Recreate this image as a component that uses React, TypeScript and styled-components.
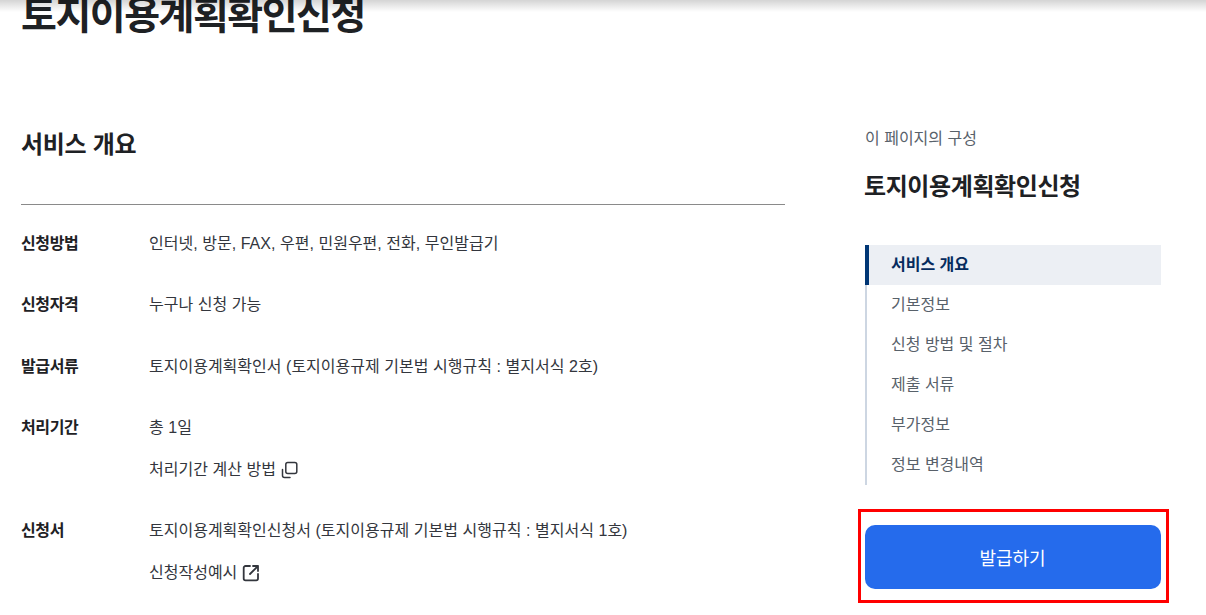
import React from "react";
import styled, { createGlobalStyle } from "styled-components";

const GlobalStyle = createGlobalStyle`
  html, body {
    margin: 0;
    padding: 0;
    height: 100%;
    overflow: hidden;
    background: #fff;
  }
  body {
    font-family: "Liberation Sans", "Noto Sans CJK KR", sans-serif;
    color: #1e2124;
  }
`;

const Page = styled.div`
  position: relative;
  width: 1206px;
  height: 615px;
  overflow: hidden;
`;

const TopShadow = styled.div`
  position: absolute;
  top: 0;
  left: 0;
  right: 0;
  height: 12px;
  background: linear-gradient(rgba(0, 0, 0, 0.17), rgba(0, 0, 0, 0));
`;

const Title = styled.h1`
  margin: -10px 0 0 21px;
  font-size: 39px;
  line-height: 52px;
  font-weight: 700;
  letter-spacing: -1.5px;
  color: #1e2124;
`;

const Columns = styled.div`
  display: flex;
  margin-top: 85px;
  padding-left: 21px;
`;

const Main = styled.main`
  width: 764px;
`;

const SectionTitle = styled.h2`
  margin: 0;
  height: 77px;
  font-size: 24px;
  line-height: 36px;
  font-weight: 700;
  letter-spacing: -0.3px;
  border-bottom: 1px solid #8a8a8a;
`;

const Rows = styled.dl`
  margin: 0;
`;

const Row = styled.div<{ $top: number }>`
  display: grid;
  grid-template-columns: 128px 1fr;
  margin-top: ${(p) => p.$top}px;
`;

const Label = styled.dt`
  font-size: 16px;
  line-height: 24px;
  font-weight: 700;
  letter-spacing: -0.4px;
`;

const Value = styled.dd`
  margin: 0;
  display: flex;
  flex-direction: column;
  gap: 18px;
`;

const Line = styled.div`
  display: flex;
  align-items: center;
  gap: 5px;
  font-size: 16px;
  line-height: 24px;
  word-spacing: 0.15px;
  color: #33363d;
`;

const Aside = styled.aside`
  width: 296px;
  margin-left: 80px;
`;

const Eyebrow = styled.div`
  margin-top: 1px;
  font-size: 16px;
  line-height: 22px;
  color: #58616a;
`;

const AsideTitle = styled.div`
  margin: 21px 0 0 -1px;
  font-size: 24px;
  line-height: 32px;
  font-weight: 700;
  letter-spacing: -0.4px;
`;

const Nav = styled.nav`
  margin-top: 42px;
  display: flex;
  flex-direction: column;
  border-left: 2px solid #cdd6e2;
`;

const NavItem = styled.a<{ $active?: boolean }>`
  display: block;
  height: 40px;
  margin-left: -2px;
  padding-left: 22px;
  font-size: 16px;
  line-height: 40px;
  font-weight: ${(p) => (p.$active ? 700 : 400)};
  color: ${(p) => (p.$active ? "#052b5e" : "#58616a")};
  background: ${(p) => (p.$active ? "#eceff4" : "transparent")};
  border-left: 4px solid ${(p) => (p.$active ? "#003675" : "transparent")};
`;

const Highlight = styled.div`
  margin: 24px 0 0 -7px;
  width: 311px;
  height: 94px;
  box-sizing: border-box;
  border: 3px solid #ff0000;
  padding: 13px 5px 11px 4px;
`;

const IssueButton = styled.button`
  display: block;
  width: 100%;
  height: 64px;
  padding: 0 1px 0 0;
  border: 0;
  border-radius: 10px;
  background: #256bec;
  color: #fff;
  font-family: inherit;
  font-size: 18px;
  font-weight: 400;
`;

const CopyIcon = () => (
  <svg width="18" height="18" viewBox="0 0 18 18" fill="none" stroke="#33363d" strokeWidth="1.5" strokeLinecap="round">
    <rect x="4.8" y="1.5" width="11" height="11" rx="2" />
    <path d="M1.5 8.5v6a2 2 0 0 0 2 2H9" />
  </svg>
);

const ExternalIcon = () => (
  <svg width="18" height="18" viewBox="0 0 18 18" fill="none" stroke="#33363d" strokeWidth="1.8" strokeLinecap="round" strokeLinejoin="round">
    <path d="M8 2H3.5A1.8 1.8 0 0 0 1.7 3.8v10.7a1.8 1.8 0 0 0 1.8 1.8h10.7a1.8 1.8 0 0 0 1.8-1.8V10" />
    <path d="M8 10l8-8M11 2h5v5" />
  </svg>
);

const navItems = ["서비스 개요", "기본정보", "신청 방법 및 절차", "제출 서류", "부가정보", "정보 변경내역"];

export default function App() {
  return (
    <Page>
      <GlobalStyle />
      <TopShadow />
      <Title>토지이용계획확인신청</Title>
      <Columns>
        <Main>
          <SectionTitle>서비스 개요</SectionTitle>
          <Rows>
            <Row $top={27}>
              <Label>신청방법</Label>
              <Value>
                <Line>인터넷, 방문, FAX, 우편, 민원우편, 전화, 무인발급기</Line>
              </Value>
            </Row>
            <Row $top={37}>
              <Label>신청자격</Label>
              <Value>
                <Line>누구나 신청 가능</Line>
              </Value>
            </Row>
            <Row $top={38}>
              <Label>발급서류</Label>
              <Value>
                <Line>토지이용계획확인서 (토지이용규제 기본법 시행규칙 : 별지서식 2호)</Line>
              </Value>
            </Row>
            <Row $top={37}>
              <Label>처리기간</Label>
              <Value>
                <Line>총 1일</Line>
                <Line>
                  처리기간 계산 방법 <CopyIcon />
                </Line>
              </Value>
            </Row>
            <Row $top={37}>
              <Label>신청서</Label>
              <Value>
                <Line>토지이용계획확인신청서 (토지이용규제 기본법 시행규칙 : 별지서식 1호)</Line>
                <Line>
                  신청작성예시 <ExternalIcon />
                </Line>
              </Value>
            </Row>
          </Rows>
        </Main>
        <Aside>
          <Eyebrow>이 페이지의 구성</Eyebrow>
          <AsideTitle>토지이용계획확인신청</AsideTitle>
          <Nav>
            {navItems.map((item, i) => (
              <NavItem key={item} $active={i === 0}>
                {item}
              </NavItem>
            ))}
          </Nav>
          <Highlight>
            <IssueButton>발급하기</IssueButton>
          </Highlight>
        </Aside>
      </Columns>
    </Page>
  );
}
